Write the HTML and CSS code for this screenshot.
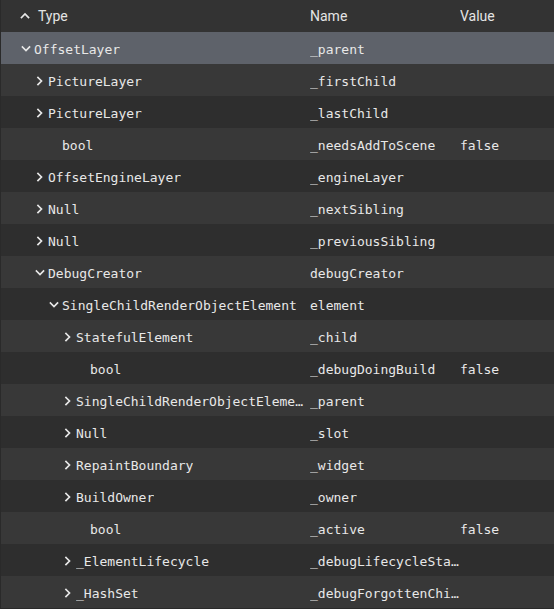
FILE: index.html
```html
<!DOCTYPE html>
<html>
<head>
<meta charset="utf-8">
<link rel="stylesheet" href="styles.css">
</head>
<body>
<div class="table">
  <div class="row header">
    <div class="cell type"><span class="caret"><svg width="10" height="10" viewBox="0 0 10 10"><path d="M1.5 6.5 L5 3 L8.5 6.5" /></svg></span><span class="htext">Type</span></div>
    <div class="cell name">Name</div>
    <div class="cell value">Value</div>
  </div>

  <div class="row sel">
    <div class="cell type d0"><span class="chev"><svg width="10" height="10" viewBox="0 0 10 10"><path d="M1.5 3 L5 6.5 L8.5 3" /></svg></span><span class="t">OffsetLayer</span></div>
    <div class="cell name"><span class="t">_parent</span></div>
    <div class="cell value"></div>
  </div>
  <div class="row light">
    <div class="cell type d1"><span class="chev"><svg width="10" height="10" viewBox="0 0 10 10"><path d="M3 1.5 L6.5 5 L3 8.5" /></svg></span><span class="t">PictureLayer</span></div>
    <div class="cell name"><span class="t">_firstChild</span></div>
    <div class="cell value"></div>
  </div>
  <div class="row dark">
    <div class="cell type d1"><span class="chev"><svg width="10" height="10" viewBox="0 0 10 10"><path d="M3 1.5 L6.5 5 L3 8.5" /></svg></span><span class="t">PictureLayer</span></div>
    <div class="cell name"><span class="t">_lastChild</span></div>
    <div class="cell value"></div>
  </div>
  <div class="row light">
    <div class="cell type d1"><span class="leaf"></span><span class="t">bool</span></div>
    <div class="cell name"><span class="t">_needsAddToScene</span></div>
    <div class="cell value"><span class="t">false</span></div>
  </div>
  <div class="row dark">
    <div class="cell type d1"><span class="chev"><svg width="10" height="10" viewBox="0 0 10 10"><path d="M3 1.5 L6.5 5 L3 8.5" /></svg></span><span class="t">OffsetEngineLayer</span></div>
    <div class="cell name"><span class="t">_engineLayer</span></div>
    <div class="cell value"></div>
  </div>
  <div class="row light">
    <div class="cell type d1"><span class="chev"><svg width="10" height="10" viewBox="0 0 10 10"><path d="M3 1.5 L6.5 5 L3 8.5" /></svg></span><span class="t">Null</span></div>
    <div class="cell name"><span class="t">_nextSibling</span></div>
    <div class="cell value"></div>
  </div>
  <div class="row dark">
    <div class="cell type d1"><span class="chev"><svg width="10" height="10" viewBox="0 0 10 10"><path d="M3 1.5 L6.5 5 L3 8.5" /></svg></span><span class="t">Null</span></div>
    <div class="cell name"><span class="t">_previousSibling</span></div>
    <div class="cell value"></div>
  </div>
  <div class="row light">
    <div class="cell type d1"><span class="chev"><svg width="10" height="10" viewBox="0 0 10 10"><path d="M1.5 3 L5 6.5 L8.5 3" /></svg></span><span class="t">DebugCreator</span></div>
    <div class="cell name"><span class="t">debugCreator</span></div>
    <div class="cell value"></div>
  </div>
  <div class="row dark">
    <div class="cell type d2"><span class="chev"><svg width="10" height="10" viewBox="0 0 10 10"><path d="M1.5 3 L5 6.5 L8.5 3" /></svg></span><span class="t">SingleChildRenderObjectElement</span></div>
    <div class="cell name"><span class="t">element</span></div>
    <div class="cell value"></div>
  </div>
  <div class="row light">
    <div class="cell type d3"><span class="chev"><svg width="10" height="10" viewBox="0 0 10 10"><path d="M3 1.5 L6.5 5 L3 8.5" /></svg></span><span class="t">StatefulElement</span></div>
    <div class="cell name"><span class="t">_child</span></div>
    <div class="cell value"></div>
  </div>
  <div class="row dark">
    <div class="cell type d3"><span class="leaf"></span><span class="t">bool</span></div>
    <div class="cell name"><span class="t">_debugDoingBuild</span></div>
    <div class="cell value"><span class="t">false</span></div>
  </div>
  <div class="row light">
    <div class="cell type d3"><span class="chev"><svg width="10" height="10" viewBox="0 0 10 10"><path d="M3 1.5 L6.5 5 L3 8.5" /></svg></span><span class="t">SingleChildRenderObjectElement</span></div>
    <div class="cell name"><span class="t">_parent</span></div>
    <div class="cell value"></div>
  </div>
  <div class="row dark">
    <div class="cell type d3"><span class="chev"><svg width="10" height="10" viewBox="0 0 10 10"><path d="M3 1.5 L6.5 5 L3 8.5" /></svg></span><span class="t">Null</span></div>
    <div class="cell name"><span class="t">_slot</span></div>
    <div class="cell value"></div>
  </div>
  <div class="row light">
    <div class="cell type d3"><span class="chev"><svg width="10" height="10" viewBox="0 0 10 10"><path d="M3 1.5 L6.5 5 L3 8.5" /></svg></span><span class="t">RepaintBoundary</span></div>
    <div class="cell name"><span class="t">_widget</span></div>
    <div class="cell value"></div>
  </div>
  <div class="row dark">
    <div class="cell type d3"><span class="chev"><svg width="10" height="10" viewBox="0 0 10 10"><path d="M3 1.5 L6.5 5 L3 8.5" /></svg></span><span class="t">BuildOwner</span></div>
    <div class="cell name"><span class="t">_owner</span></div>
    <div class="cell value"></div>
  </div>
  <div class="row light">
    <div class="cell type d3"><span class="leaf"></span><span class="t">bool</span></div>
    <div class="cell name"><span class="t">_active</span></div>
    <div class="cell value"><span class="t">false</span></div>
  </div>
  <div class="row dark">
    <div class="cell type d3"><span class="chev"><svg width="10" height="10" viewBox="0 0 10 10"><path d="M3 1.5 L6.5 5 L3 8.5" /></svg></span><span class="t">_ElementLifecycle</span></div>
    <div class="cell name"><span class="t">_debugLifecycleState</span></div>
    <div class="cell value"></div>
  </div>
  <div class="row light">
    <div class="cell type d3"><span class="chev"><svg width="10" height="10" viewBox="0 0 10 10"><path d="M3 1.5 L6.5 5 L3 8.5" /></svg></span><span class="t">_HashSet</span></div>
    <div class="cell name"><span class="t">_debugForgottenChildren</span></div>
    <div class="cell value"></div>
  </div>
</div>
</body>
</html>
```

FILE: styles.css
```css
html, body {
  margin: 0;
  padding: 0;
  background: #2a2a2a;
  width: 554px;
  height: 609px;
  overflow: hidden;
}

.table {
  margin-left: 1px;
  display: flex;
  flex-direction: column;
  font-family: "DejaVu Sans Mono", "Liberation Mono", monospace;
  font-size: 13px;
  color: #e8e8e8;
}

.row {
  display: grid;
  grid-template-columns: 303px 6px 150px 1fr;
  height: 32px;
  align-items: center;
}

.row .cell.name { grid-column: 3; }
.row .cell.value { grid-column: 4; }

.header {
  background: #333333;
  font-family: Roboto, "Liberation Sans", sans-serif;
  font-size: 14px;
  color: #e4e4e4;
}

.sel { background: #5e626a; }
.light { background: #383838; }
.dark { background: #2e2e2e; }

.cell {
  display: flex;
  align-items: center;
  min-width: 0;
  height: 32px;
  white-space: nowrap;
  box-sizing: border-box;
}

.row:not(.header) .cell {
  padding-top: 2px;
}

.cell.name, .cell.value {
  overflow: hidden;
}

.t {
  overflow: hidden;
  text-overflow: ellipsis;
  white-space: nowrap;
  min-width: 0;
}

.type { padding-left: 19px; }
.type.d0 { padding-left: 19px; }
.type.d1 { padding-left: 33px; }
.type.d2 { padding-left: 47px; }
.type.d3 { padding-left: 61px; }

.caret {
  width: 14px;
  height: 32px;
  display: flex;
  align-items: center;
  justify-content: flex-start;
  margin-right: 4px;
  flex: none;
}

.chev {
  width: 14px;
  height: 30px;
  display: flex;
  align-items: flex-start;
  padding-top: 10px;
  box-sizing: border-box;
  flex: none;
}

.leaf {
  width: 28px;
  flex: none;
}

svg {
  display: block;
  fill: none;
  stroke: #e8e8e8;
  stroke-width: 1.7;
  stroke-linecap: square;
  stroke-linejoin: miter;
}

.chev svg { margin-left: 1px; }
```
